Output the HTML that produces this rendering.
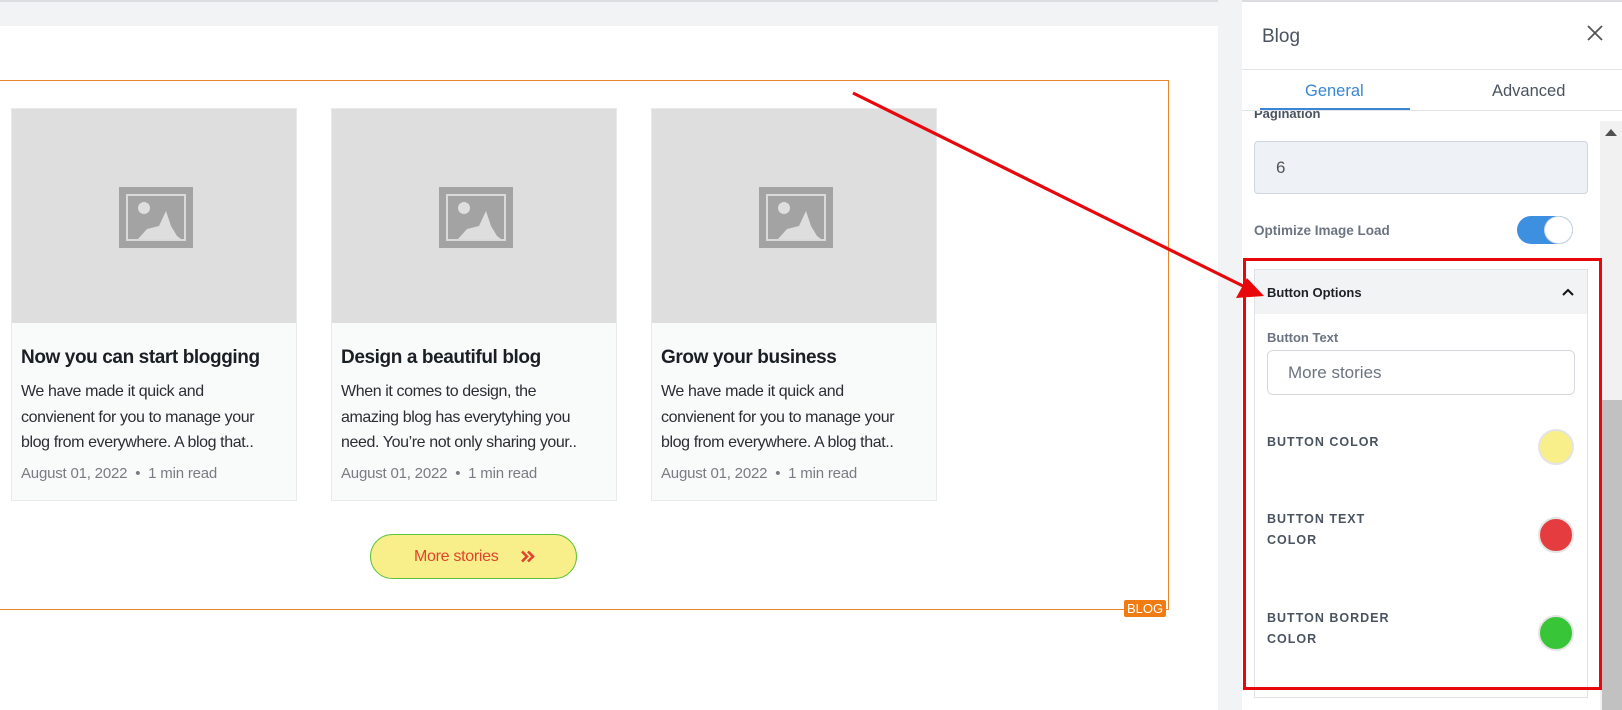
<!DOCTYPE html>
<html><head><meta charset="utf-8"><style>
*{box-sizing:border-box;margin:0;padding:0}
body{width:1622px;height:710px;overflow:hidden;background:#f2f3f5;font-family:"Liberation Sans",sans-serif;position:relative}
.abs{position:absolute}
.canvas{left:0;top:26px;width:1218px;height:684px;background:#fff}
.topline{left:0;top:0;width:1218px;height:2px;background:#dcdde0}
.frame{left:-2px;top:80px;width:1171px;height:530px;border:1px solid #e8852a}
.tag{left:1124px;top:600px;width:42px;height:17px;background:#f07b12;color:#fff;font-size:13px;line-height:17px;text-align:center;border-radius:2px}
.card{top:108px;width:286px;height:393px;border:1px solid #e8eaec;background:#f9fafa}
.card .img{height:214px;background:#dedede;position:relative}
.card .img svg{position:absolute;left:107px;top:78px}
.card h3{position:absolute;left:9px;top:238px;font-size:19px;font-weight:bold;color:#1a1f24;letter-spacing:-0.4px;white-space:nowrap}
.card p{position:absolute;left:9px;top:270px;font-size:16px;line-height:25.5px;color:#2a2f33;letter-spacing:-0.4px;white-space:nowrap}
.card .meta{position:absolute;left:9px;top:356px;font-size:15px;color:#777d82;letter-spacing:-0.2px;white-space:nowrap}
.btn{left:370px;top:534px;width:207px;height:45px;border:1px solid #5dc13a;border-radius:23px;background:#f8ef8a;color:#e0432f;font-size:16px;line-height:43px;letter-spacing:-0.3px}
.side{left:1242px;top:0;width:380px;height:710px;background:#fff}
.scroll{left:1600px;top:121px;width:22px;height:589px;background:#f1f1f1}
.thumb{left:1602px;top:400px;width:20px;height:310px;background:#c1c1c1}
.lbl{font-size:12.5px;font-weight:bold;color:#4a5360;letter-spacing:1px;line-height:21px}
.dot{width:36px;height:36px;border-radius:50%;border:2px solid #e4e4e4}
</style></head><body>
<div class="abs topline"></div>
<div class="abs canvas"></div>
<div class="abs frame"></div>
<div class="abs tag">BLOG</div>

<div class="abs card" style="left:11px"><div class="img"><svg width="74" height="61" viewBox="0 0 74 61"><rect x="0" y="0" width="74" height="61" fill="#a3a3a3"/><rect x="7" y="7" width="60" height="47" fill="#dadada"/><rect x="9" y="9" width="56" height="43" fill="#a3a3a3"/><circle cx="25" cy="21" r="6" fill="#dedede"/><polygon points="19,52 28,42 40,39 47,24 52,39 58,49 62,52" fill="#dedede"/></svg></div>
<h3>Now you can start blogging</h3><p>We have made it quick and<br>convienent for you to manage your<br>blog from everywhere. A blog that..</p><div class="meta">August 01, 2022 &nbsp;•&nbsp; 1 min read</div></div>
<div class="abs card" style="left:331px"><div class="img"><svg width="74" height="61" viewBox="0 0 74 61"><rect x="0" y="0" width="74" height="61" fill="#a3a3a3"/><rect x="7" y="7" width="60" height="47" fill="#dadada"/><rect x="9" y="9" width="56" height="43" fill="#a3a3a3"/><circle cx="25" cy="21" r="6" fill="#dedede"/><polygon points="19,52 28,42 40,39 47,24 52,39 58,49 62,52" fill="#dedede"/></svg></div>
<h3>Design a beautiful blog</h3><p>When it comes to design, the<br>amazing blog has everytyhing you<br>need. You’re not only sharing your..</p><div class="meta">August 01, 2022 &nbsp;•&nbsp; 1 min read</div></div>
<div class="abs card" style="left:651px"><div class="img"><svg width="74" height="61" viewBox="0 0 74 61"><rect x="0" y="0" width="74" height="61" fill="#a3a3a3"/><rect x="7" y="7" width="60" height="47" fill="#dadada"/><rect x="9" y="9" width="56" height="43" fill="#a3a3a3"/><circle cx="25" cy="21" r="6" fill="#dedede"/><polygon points="19,52 28,42 40,39 47,24 52,39 58,49 62,52" fill="#dedede"/></svg></div>
<h3>Grow your business</h3><p>We have made it quick and<br>convienent for you to manage your<br>blog from everywhere. A blog that..</p><div class="meta">August 01, 2022 &nbsp;•&nbsp; 1 min read</div></div>

<div class="abs btn"><span class="abs" style="left:43px;top:0">More stories</span><svg class="abs" style="left:150px;top:15px" width="14" height="13" viewBox="0 0 14 13"><path d="M1 1.5L6 6.5L1 11.5M7 1.5L12 6.5L7 11.5" stroke="#e0432f" stroke-width="2.6" fill="none"/></svg></div>

<div class="abs side"></div>
<div class="abs" style="left:1242px;top:0;width:380px;height:2px;background:#dcdde0"></div>
<div class="abs" style="left:1262px;top:26px;font-size:19px;color:#4a5360">Blog</div>
<svg class="abs" style="left:1587px;top:25px" width="16" height="16" viewBox="0 0 16 16"><path d="M1 1L15 15M15 1L1 15" stroke="#555" stroke-width="1.8"/></svg>
<div class="abs" style="left:1242px;top:69px;width:380px;height:1px;background:#e2e4e7"></div>
<div class="abs" style="left:1305px;top:82px;font-size:16.5px;color:#3a86d6">General</div>
<div class="abs" style="left:1492px;top:82px;font-size:16.5px;color:#4a5360">Advanced</div>
<div class="abs" style="left:1260px;top:108px;width:150px;height:3px;background:#3a86d6"></div>
<div class="abs" style="left:1242px;top:110px;width:380px;height:1px;background:#e2e4e7"></div>
<div class="abs" style="left:1254px;top:111px;height:14px;overflow:hidden;font-size:13px;font-weight:bold;color:#4a5360;line-height:6px">Pagination</div>
<div class="abs scroll"></div>
<svg class="abs" style="left:1605px;top:129px" width="12" height="7"><polygon points="6,0 12,7 0,7" fill="#505050"/></svg>
<div class="abs thumb"></div>
<div class="abs" style="left:1254px;top:141px;width:334px;height:53px;background:#eef2f6;border:1px solid #cfd6de;border-radius:4px;font-size:17px;color:#555;padding:16px 0 0 21px">6</div>
<div class="abs" style="left:1254px;top:223px;font-size:13.5px;font-weight:bold;color:#6b7480">Optimize Image Load</div>
<div class="abs" style="left:1517px;top:216px;width:56px;height:28px;border-radius:14px;background:#3d8fe0"></div>
<div class="abs" style="left:1544px;top:216px;width:29px;height:28px;border-radius:50%;background:#fff;border:1px solid #d5d9de"></div>

<div class="abs" style="left:1254px;top:269px;width:334px;height:429px;border:1px solid #dfe2e6;background:#fff"></div>
<div class="abs" style="left:1255px;top:270px;width:332px;height:44px;background:#f2f3f5"></div>
<div class="abs" style="left:1267px;top:285px;font-size:13px;font-weight:bold;color:#1c2128">Button Options</div>
<svg class="abs" style="left:1562px;top:288px" width="12" height="8"><path d="M1 7L6 2L11 7" stroke="#111" stroke-width="2" fill="none"/></svg>
<div class="abs" style="left:1267px;top:330px;font-size:13px;font-weight:bold;color:#6b7480">Button Text</div>
<div class="abs" style="left:1267px;top:350px;width:308px;height:45px;border:1px solid #d5d9de;border-radius:6px;font-size:17px;color:#6b7480;padding:12px 0 0 20px">More stories</div>
<div class="abs lbl" style="left:1267px;top:432px">BUTTON COLOR</div>
<div class="abs dot" style="left:1538px;top:429px;background:#f8ef8a"></div>
<div class="abs lbl" style="left:1267px;top:509px">BUTTON TEXT<br>COLOR</div>
<div class="abs dot" style="left:1538px;top:517px;background:#e53d3f"></div>
<div class="abs lbl" style="left:1267px;top:608px">BUTTON BORDER<br>COLOR</div>
<div class="abs dot" style="left:1538px;top:615px;background:#38c638"></div>

<div class="abs" style="left:1243px;top:258px;width:359px;height:432px;border:3px solid #e8080c"></div>
<svg class="abs" style="left:0;top:0" width="1622" height="710"><line x1="853" y1="93" x2="1245" y2="287" stroke="#e8080c" stroke-width="3.2"/><polygon points="1264,296 1236,298 1247,278" fill="#e8080c"/></svg>
</body></html>
